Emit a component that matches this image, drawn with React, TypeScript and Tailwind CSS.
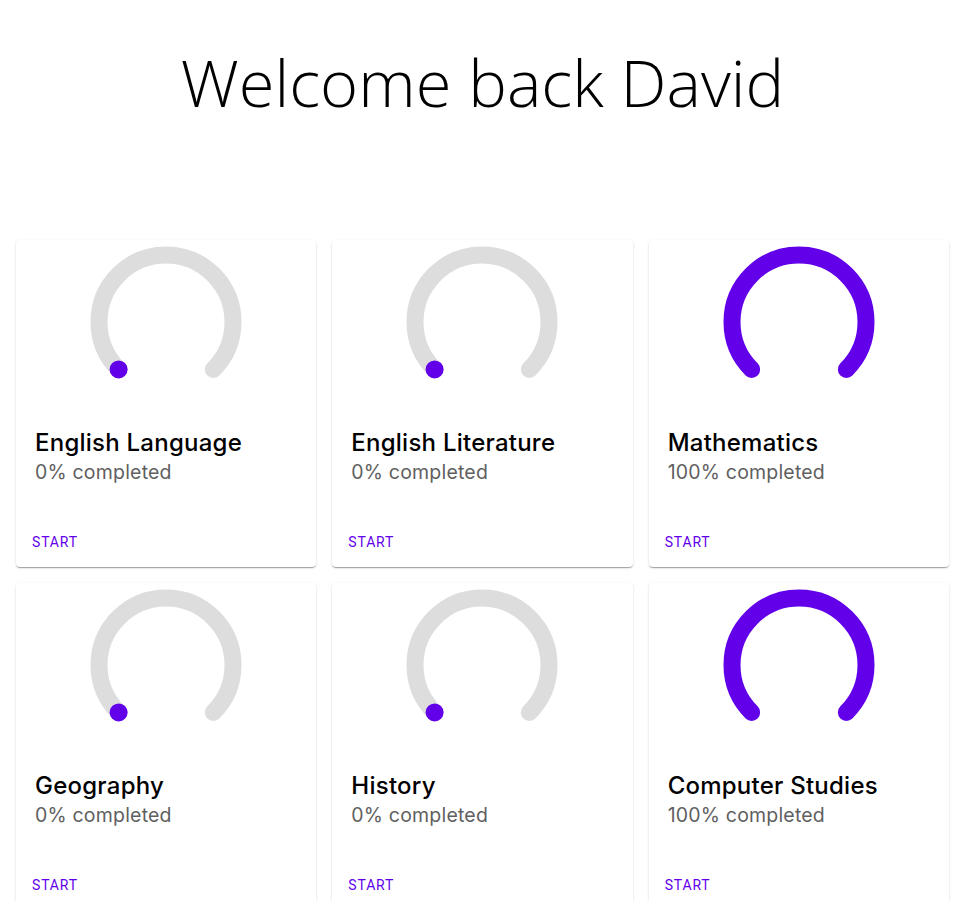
const subjects = [
  { name: 'English Language', progress: 0 },
  { name: 'English Literature', progress: 0 },
  { name: 'Mathematics', progress: 100 },
  { name: 'Geography', progress: 0 },
  { name: 'History', progress: 0 },
  { name: 'Computer Studies', progress: 100 },
]

const R = 67
const CX = 80
const CY = 80
const D = R * Math.SQRT1_2
const ARC = `M ${CX - D} ${CY + D} A ${R} ${R} 0 1 1 ${CX + D} ${CY + D}`

function Gauge({ progress }: { progress: number }) {
  const full = progress >= 100
  return (
    <svg viewBox="0 0 160 150" className="mx-auto mt-[2px] block h-[150px] w-[160px]">
      <path d={ARC} fill="none" stroke={full ? '#6200ea' : '#dddddd'} strokeWidth={17} strokeLinecap="round" />
      {!full && <circle cx={CX - D} cy={CY + D} r={9} fill="#6200ea" />}
    </svg>
  )
}

function SubjectCard({ name, progress }: { name: string; progress: number }) {
  return (
    <div className="flex h-[327px] flex-col rounded bg-white shadow-[0_2px_1px_-1px_rgba(0,0,0,0.2),0_1px_1px_0_rgba(0,0,0,0.14),0_1px_3px_0_rgba(0,0,0,0.12)]">
      <Gauge progress={progress} />
      <div className="pl-[19px] pt-[36px]">
        <h2 className="text-[24px] font-medium leading-[30px] tracking-[0.01em] text-black [font-family:Inter,sans-serif]">{name}</h2>
        <p className="text-[19.5px] leading-[29px] tracking-[0.01em] text-[#5f5f5f] [font-family:Inter,sans-serif]">{progress}% completed</p>
      </div>
      <div className="flex-1" />
      <div className="pb-[14px] pl-[16px]">
        <button className="text-[14px] uppercase leading-[18px] tracking-[0.06em] text-[#6200ea] [font-family:Roboto,sans-serif]">
          Start
        </button>
      </div>
    </div>
  )
}

export default function App() {
  return (
    <div className="min-h-screen bg-white">
      <h1 className="pt-[44px] text-center text-[65px] font-light leading-[76px] text-black [font-family:'Open_Sans',sans-serif]">
        Welcome back David
      </h1>
      <div className="mt-[120px] grid grid-cols-3 gap-4 px-4">
        {subjects.map((s) => (
          <SubjectCard key={s.name} {...s} />
        ))}
      </div>
    </div>
  )
}
